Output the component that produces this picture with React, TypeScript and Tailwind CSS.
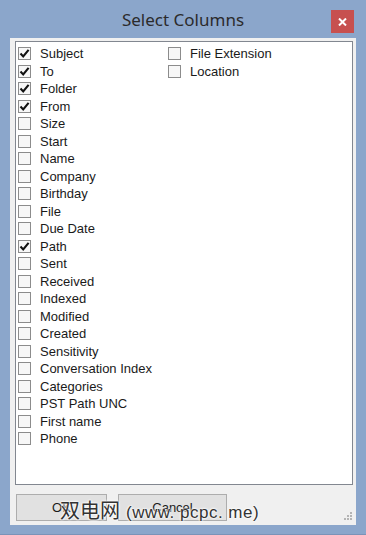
import React from 'react'

type Col = { label: string; checked?: boolean }

const left: Col[] = [
  { label: 'Subject', checked: true },
  { label: 'To', checked: true },
  { label: 'Folder', checked: true },
  { label: 'From', checked: true },
  { label: 'Size' },
  { label: 'Start' },
  { label: 'Name' },
  { label: 'Company' },
  { label: 'Birthday' },
  { label: 'File' },
  { label: 'Due Date' },
  { label: 'Path', checked: true },
  { label: 'Sent' },
  { label: 'Received' },
  { label: 'Indexed' },
  { label: 'Modified' },
  { label: 'Created' },
  { label: 'Sensitivity' },
  { label: 'Conversation Index' },
  { label: 'Categories' },
  { label: 'PST Path UNC' },
  { label: 'First name' },
  { label: 'Phone' },
]

const right: Col[] = [{ label: 'File Extension' }, { label: 'Location' }]

function CheckRow({ label, checked }: Col) {
  return (
    <div className="flex h-[17.5px] items-center">
      <span className="ml-px flex h-[13px] w-[13px] shrink-0 items-center justify-center border border-[#8c8c8c] bg-[#f7f7f7]">
        {checked && (
          <svg width="11" height="11" viewBox="0 0 11 11">
            <path d="M1.5 5.6 L4.2 8.4 L9.6 1.8" fill="none" stroke="#111" strokeWidth="2.1" />
          </svg>
        )}
      </span>
      <span className="ml-[9px] whitespace-nowrap text-[13px] leading-none text-[#1a1a1a]">{label}</span>
    </div>
  )
}

export default function App() {
  return (
    <div
      className="flex h-[535px] w-[366px] flex-col border-b border-[#7b93b8] bg-[#8ba6cb]"
      style={{ fontFamily: '"Liberation Sans", Arial, sans-serif' }}
    >
      <div className="relative flex h-[38px] shrink-0 items-center justify-center pt-px">
        <span className="text-[17px] text-[#2b2b2b]" style={{ fontFamily: '"Noto Sans", "Liberation Sans", sans-serif' }}>
          Select Columns
        </span>
        <button className="absolute right-[12px] top-[10px] flex h-[23px] w-[23px] items-center justify-center bg-[#c7504f]">
          <svg width="9" height="8" viewBox="0 0 9 8">
            <path d="M1 0.5 L8 7.5 M8 0.5 L1 7.5" stroke="#fff" strokeWidth="2" />
          </svg>
        </button>
      </div>

      <div className="relative mx-[10px] mb-[9px] flex flex-1 flex-col bg-[#f0f0f0] pl-[5px] pr-[3px] pt-[3px]">
        <div className="flex h-[444px] border border-[#828790] bg-white pt-[3px] pl-px">
          <div className="flex w-[150px] flex-col">
            {left.map((c) => (
              <CheckRow key={c.label} {...c} />
            ))}
          </div>
          <div className="flex flex-col">
            {right.map((c) => (
              <CheckRow key={c.label} {...c} />
            ))}
          </div>
        </div>

        <div className="mt-[9px] flex gap-[11px] pl-px">
          <button className="h-[27px] w-[91px] border border-[#adadad] bg-[#e1e1e1] text-[13px] text-[#1a1a1a]">OK</button>
          <button className="h-[27px] w-[109px] border border-[#adadad] bg-[#e1e1e1] text-[13px] text-[#1a1a1a]">Cancel</button>
        </div>

        <svg className="absolute bottom-[3px] right-[3px]" width="10" height="10" viewBox="0 0 10 10">
          <g fill="#b4b4b4">
            <rect x="7" y="0" width="2" height="2" />
            <rect x="4" y="3" width="2" height="2" />
            <rect x="7" y="3" width="2" height="2" />
            <rect x="1" y="6" width="2" height="2" />
            <rect x="4" y="6" width="2" height="2" />
            <rect x="7" y="6" width="2" height="2" />
          </g>
        </svg>

        <span
          className="absolute left-[50px] top-[462px] flex items-baseline whitespace-nowrap leading-none text-[#333] [text-shadow:0_0_2px_#fff,0_0_2px_#fff,0_0_3px_#fff]"
          style={{ fontFamily: '"Noto Sans CJK SC", "Liberation Sans", sans-serif' }}
        >
          <span className="text-[20px]">双电网</span>
          <span className="ml-[6px] text-[17px] tracking-[0.5px]" style={{ fontFamily: '"Liberation Sans", Arial, sans-serif' }}>
            (www. pcpc. me)
          </span>
        </span>
      </div>
    </div>
  )
}
